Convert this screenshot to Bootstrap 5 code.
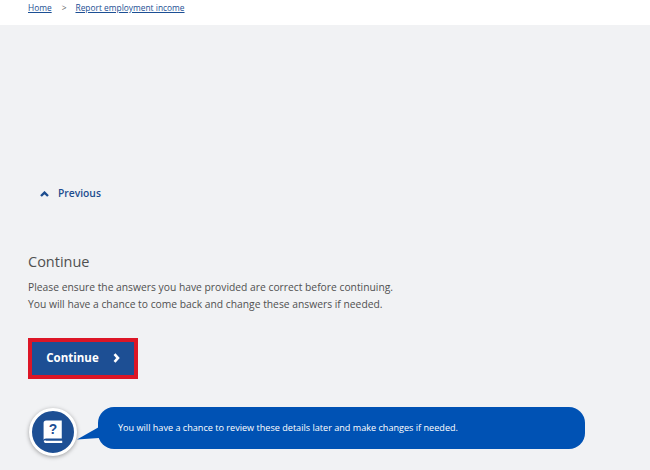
<!DOCTYPE html>
<html lang="en">
<head>
<meta charset="utf-8">
<title>Continue</title>
<link href="https://cdn.jsdelivr.net/npm/bootstrap@5.3.0/dist/css/bootstrap.min.css" rel="stylesheet">
<style>
html, body { height: 100%; overflow: hidden; }
body { background: #f1f2f4; font-family: "Open Sans", "Noto Sans", sans-serif; color: #555; width: 650px; }
.crumbbar { background: #fff; height: 25px; padding: 0 0 0 28px; font-size: 8.4px; line-height: 15px; }
.crumbbar a { color: #1c4f94; }
.crumbsep { color: #666; margin: 0 9px 0 10px; }
.mainarea { padding: 0 28px; }
.prevlink { margin-top: 160px; padding-left: 12px; height: 17px; font-size: 10.3px; line-height: 17px; font-weight: 600; color: #1d4d8f; gap: 9px; text-decoration: none; }
.conttitle { margin: 50px 0 0; font-size: 14.5px; line-height: 20px; font-weight: 400; color: #505050; }
.contdesc { margin: 7px 0 0; font-size: 10.3px; line-height: 17px; color: #505050; }
.redframe { margin-top: 25px; width: 110px; height: 41px; border: 4px solid #dc1626; }
.contbtn { width: 102px; height: 33px; border: 1px solid #1d4f94; border-radius: 0; background: #1d4f94; color: #fff; font-size: 11.5px; font-weight: 700; gap: 14px; padding: 0 0 2px; --bs-btn-hover-bg: #1d4f94; }
.helprow { margin-top: 28px; width: 557px; }
.helpicon { width: 48px; height: 48px; margin: 1px 0 0 1px; border-radius: 50%; background: #1d4f94; border: 3px solid #fff; box-shadow: 0 1px 4px rgba(0,0,0,.35); flex: none; z-index: 1; }
.helptail { flex: none; width: 22px; height: 42px; margin-right: -1px; }
.helpbubble { flex: 1; height: 42px; background: #0052b4; color: #fff; border-radius: 16px; font-size: 9.1px; font-weight: 500; padding-left: 20px; }
</style>
</head>
<body>
<nav class="crumbbar" aria-label="Breadcrumb">
  <a href="#">Home</a><span class="crumbsep">&gt;</span><a href="#">Report employment income</a>
</nav>
<main class="mainarea">
  <a href="#" class="prevlink d-flex align-items-center">
    <svg width="9" height="6" viewBox="0 0 9 6" aria-hidden="true"><path d="M1 5 L4.5 1.6 L8 5" fill="none" stroke="#1d4d8f" stroke-width="2.4"/></svg>
    Previous
  </a>
  <h2 class="conttitle">Continue</h2>
  <p class="contdesc">Please ensure the answers you have provided are correct before continuing.<br>You will have a chance to come back and change these answers if needed.</p>
  <div class="redframe">
    <button type="button" class="btn contbtn d-flex align-items-center justify-content-center">
      Continue
      <svg width="7" height="10" viewBox="0 0 7 10" aria-hidden="true"><path d="M1.5 1.2 L5 5 L1.5 8.8" fill="none" stroke="#fff" stroke-width="2.6"/></svg>
    </button>
  </div>
  <div class="helprow d-flex align-items-start">
    <div class="helpicon d-flex align-items-center justify-content-center">
      <svg width="22" height="24" viewBox="0 0 22 26" aria-hidden="true">
        <path d="M3.5 0.5 H20.5 V20 H3.5 C1.5 20 0.8 21 0.8 22 V3.5 C0.8 1.5 1.8 0.5 3.5 0.5 Z" fill="#fff"/>
        <path d="M1 22.5 C1 24.2 2 25 3.5 25 H21 V22.6 H3.8 C3.2 22.6 3 22.5 2.9 22 Z" fill="#fff"/>
        <text x="11" y="15.5" text-anchor="middle" font-family="Liberation Sans, sans-serif" font-weight="700" font-size="15" fill="#1d4f94">?</text>
      </svg>
    </div>
    <svg class="helptail" viewBox="0 0 22 42" aria-hidden="true"><path d="M0 32.5 L22 20 V31 Z" fill="#0052b4"/></svg>
    <div class="helpbubble d-flex align-items-center">You will have a chance to review these details later and make changes if needed.</div>
  </div>
</main>
<script src="https://cdn.jsdelivr.net/npm/bootstrap@5.3.0/dist/js/bootstrap.bundle.min.js"></script>
</body>
</html>
